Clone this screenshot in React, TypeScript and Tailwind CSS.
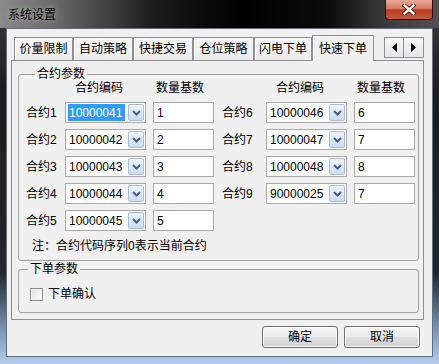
import React from "react";

function Chevron() {
  return (
    <svg width="9" height="6" viewBox="0 0 9 6">
      <path d="M1 1 L4.5 4.5 L8 1" fill="none" stroke="#4a5d80" strokeWidth="2" />
    </svg>
  );
}

function Combo({ value, selected }: { value: string; selected?: boolean }) {
  return (
    <div className="w-[81px] h-[21px] border border-[#a9a9a9] bg-white p-px flex items-stretch">
      <div className="flex-1 flex items-center pl-px">
        {selected ? (
          <span className="bg-[#3399ff] text-white w-[57px] h-full flex items-center pl-px">{value}</span>
        ) : (
          <span className="pl-px">{value}</span>
        )}
      </div>
      <div className="w-[16px] border border-[#a7bedb] rounded-[2px] bg-[linear-gradient(180deg,#eef4fc_0%,#dce8f7_50%,#c9dbf2_100%)] flex items-center justify-center">
        <Chevron />
      </div>
    </div>
  );
}

type RowData = { label: string; code: string; qty: string; selected?: boolean };

function Column({ rows, labelW }: { rows: RowData[]; labelW: string }) {
  return (
    <div className="flex flex-col">
      <div className="flex h-[14px]">
        <div className={labelW} />
        <div className="w-[81px] pl-[10px]">合约编码</div>
        <div className="ml-[7px] pl-[3px]">数量基数</div>
      </div>
      <div className="mt-[7px] flex flex-col gap-[6px]">
        {rows.map((r) => (
          <div key={r.label} className="flex items-center h-[21px]">
            <div className={labelW}>{r.label}</div>
            <Combo value={r.code} selected={r.selected} />
            <div className="ml-[7px] w-[61px] h-[21px] border border-[#a9a9a9] bg-white flex items-center pl-[3px]">
              {r.qty}
            </div>
          </div>
        ))}
      </div>
    </div>
  );
}

const leftRows: RowData[] = [
  { label: "合约1", code: "10000041", qty: "1", selected: true },
  { label: "合约2", code: "10000042", qty: "2" },
  { label: "合约3", code: "10000043", qty: "3" },
  { label: "合约4", code: "10000044", qty: "4" },
  { label: "合约5", code: "10000045", qty: "5" },
];
const rightRows: RowData[] = [
  { label: "合约6", code: "10000046", qty: "6" },
  { label: "合约7", code: "10000047", qty: "7" },
  { label: "合约8", code: "10000048", qty: "8" },
  { label: "合约9", code: "90000025", qty: "7" },
];

const tabs = [
  { t: "价量限制", w: "w-[59px]" },
  { t: "自动策略", w: "w-[60px]" },
  { t: "快捷交易", w: "w-[60px]" },
  { t: "仓位策略", w: "w-[61px]" },
  { t: "闪电下单", w: "w-[58px]" },
];

function Tri({ dir }: { dir: "l" | "r" }) {
  return (
    <svg width="5" height="9" viewBox="0 0 5 9">
      {dir === "l" ? <path d="M5 0 L0 4.5 L5 9 Z" fill="#000" /> : <path d="M0 0 L5 4.5 L0 9 Z" fill="#000" />}
    </svg>
  );
}

function WinButton({ children }: { children: React.ReactNode }) {
  return (
    <div className="w-[76px] h-[22px] border border-[#707070] rounded-[3px] bg-[linear-gradient(180deg,#f4f4f4_0%,#ececec_48%,#dedede_52%,#d2d2d2_100%)] shadow-[inset_0_0_0_1px_#fafafa] flex items-center justify-center">
      {children}
    </div>
  );
}

export default function App() {
  return (
    <div className="w-[439px] h-[364px] overflow-hidden flex flex-col text-[12px] leading-[14px] text-black [font-family:Liberation_Sans,Noto_Sans_CJK_SC,sans-serif] bg-[linear-gradient(180deg,#3c3c3c_0%,#1c1c1c_25%,#22262c_75%,#7d97b8_91%,#b5cde8_100%)]">
      {/* title bar */}
      <div className="h-[28px] shrink-0 flex items-start bg-[linear-gradient(90deg,#8a8a8a_0%,#6c6c6c_12%,#1c1c1c_35%,#000_55%,#0c0c0c_75%,#3c3c3c_88%,#505050_100%)]">
        <div className="pl-[8px] pt-[8px] [text-shadow:0_0_5px_rgba(255,255,255,0.55)]">系统设置</div>
        <div className="ml-auto mr-[6px] w-[48px] h-[20px] rounded-b-[4px] border border-t-0 border-[#3a0c06] bg-[linear-gradient(180deg,#e9a896_0%,#d77a62_45%,#bb3c22_52%,#c9573a_100%)] flex items-center justify-center">
          <svg width="14" height="11" viewBox="0 0 14 11">
            <path d="M2.5 1.5 L11.5 9.5 M11.5 1.5 L2.5 9.5" stroke="#4a1208" strokeWidth="4.2" strokeLinecap="square" />
            <path d="M2.5 1.5 L11.5 9.5 M11.5 1.5 L2.5 9.5" stroke="#fff" strokeWidth="2.4" strokeLinecap="square" />
          </svg>
        </div>
      </div>

      {/* client area */}
      <div className="ml-[6px] w-[427px] h-[329px] shrink-0 border border-[#5f6f85] bg-[#f0f0f0] flex flex-col">
        {/* tab strip */}
        <div className="mt-[6px] ml-[4px] w-[413px] h-[25px] pl-[3px] flex items-end">
          {tabs.map((tb) => (
            <div
              key={tb.t}
              className={`${tb.w} h-[23px] border border-b-0 border-[#8e9096] bg-[linear-gradient(180deg,#f7f7f7_0%,#ececec_100%)] shadow-[inset_1px_1px_0_#ffffff] flex items-center justify-center`}
            >
              {tb.t}
            </div>
          ))}
          <div className="relative z-10 w-[62px] h-[26px] -mb-px border border-b-0 border-[#8e9096] bg-[#f0f0f0] shadow-[inset_1px_1px_0_#ffffff] flex items-start justify-center pt-[6px]">
            快速下单
          </div>
          <div className="ml-auto mb-[2px] flex">
            <div className="w-[20px] h-[21px] border border-[#8e9096] bg-[linear-gradient(180deg,#f6f6f6,#e6e6e6)] flex items-center justify-center">
              <Tri dir="l" />
            </div>
            <div className="w-[20px] h-[21px] border border-l-0 border-[#8e9096] bg-[linear-gradient(180deg,#f6f6f6,#e6e6e6)] flex items-center justify-center">
              <Tri dir="r" />
            </div>
          </div>
        </div>

        {/* tab panel */}
        <div className="ml-[4px] w-[413px] border border-[#8e9096] bg-[#f0f0f0] pb-[6px] flex flex-col">
          <fieldset className="ml-[6px] mr-[4px] mt-[6px] border border-[#a0a0a0] rounded-[3px] pl-[7px] pb-[7px]">
            <legend className="ml-[9px] px-[2px] leading-[14px]">合约参数</legend>
            <div className="flex gap-[8px]">
              <Column rows={leftRows} labelW="w-[39px]" />
              <Column rows={rightRows} labelW="w-[44px]" />
            </div>
            <div className="mt-[8px] ml-[6px] h-[14px]">注：合约代码序列0表示当前合约</div>
          </fieldset>

          <fieldset className="ml-[6px] mr-[4px] mt-px border border-[#a0a0a0] rounded-[3px] pb-[11px]">
            <legend className="ml-[9px] px-[2px] leading-[14px]">下单参数</legend>
            <div className="mt-[11px] ml-[11px] h-[14px] flex items-center">
              <div className="w-[13px] h-[13px] border border-[#8e8f8f] bg-[linear-gradient(135deg,#dcdcdc,#ffffff)] shadow-[inset_0_0_0_1px_#f4f4f4]" />
              <div className="ml-[5px]">下单确认</div>
            </div>
          </fieldset>
        </div>

        {/* buttons */}
        <div className="mt-[6px] mr-[12px] flex justify-end gap-[6px]">
          <WinButton>确定</WinButton>
          <WinButton>取消</WinButton>
        </div>
      </div>
    </div>
  );
}
